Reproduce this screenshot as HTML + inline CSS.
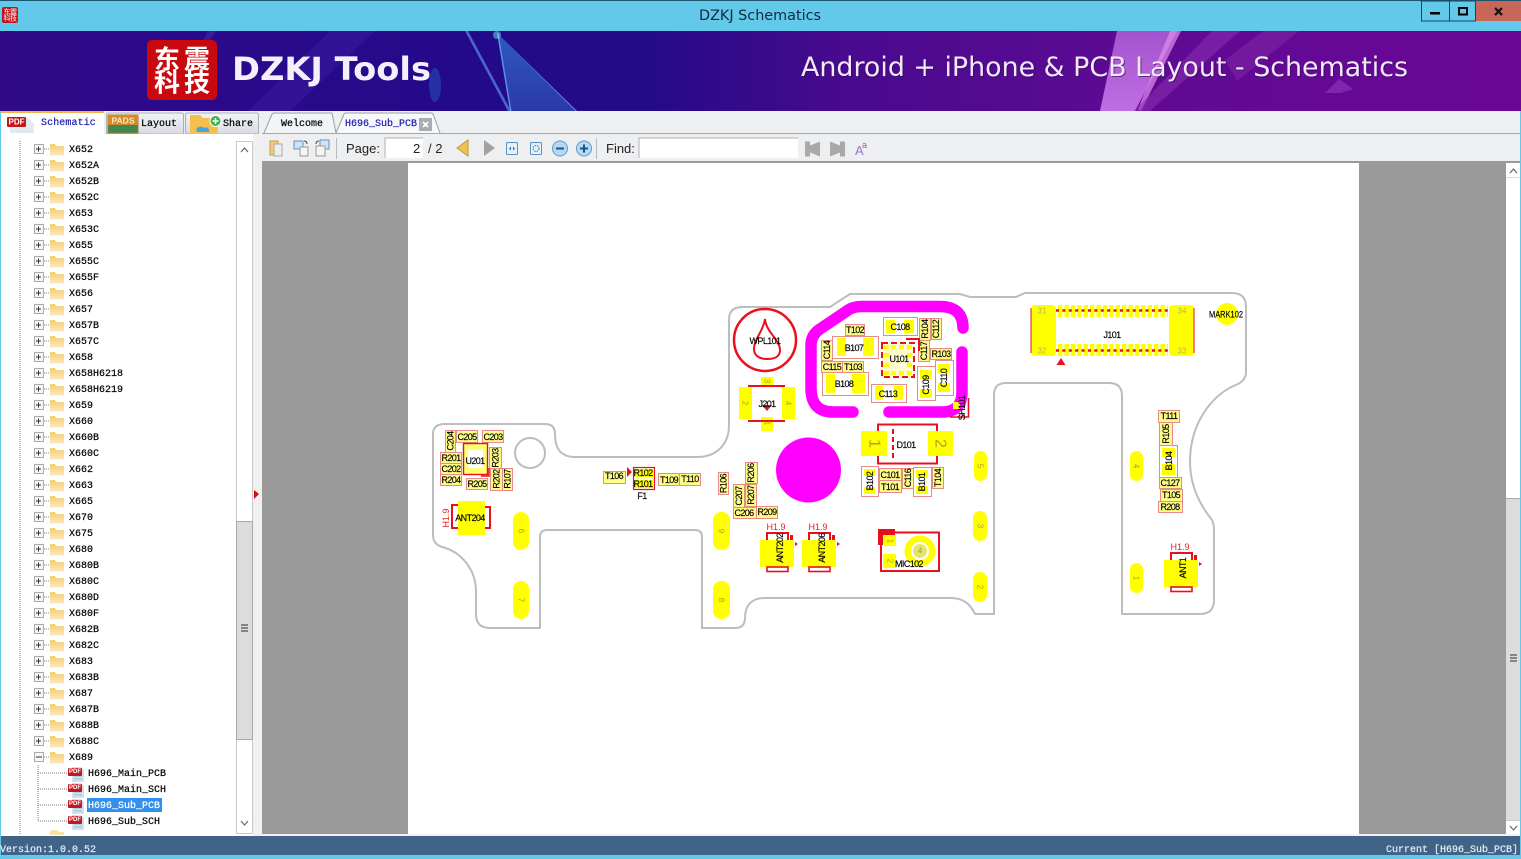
<!DOCTYPE html>
<html lang="en"><head><meta charset="utf-8"><title>DZKJ Schematics</title>
<style>
html,body{margin:0;padding:0;width:1521px;height:859px;overflow:hidden;background:#eeeff1}
svg{position:absolute;left:0;top:0}
.m{position:absolute;font-family:"Liberation Mono",monospace;font-size:10px;white-space:pre;color:#000;-webkit-text-stroke:.2px currentColor}
.t{font:9px "Liberation Sans",sans-serif;letter-spacing:-.6px;text-anchor:middle;dominant-baseline:central;fill:#000;stroke:#000;stroke-width:.15px}
.n{font:8px "Liberation Sans",sans-serif;text-anchor:middle;dominant-baseline:central;fill:#a5a520}
.h{font:9px "Liberation Sans",sans-serif;text-anchor:middle;dominant-baseline:central;fill:#e0202a}
.b{fill:#fffd88;stroke:#e88a8a;stroke-width:1}
.y{fill:#ffff00}
.r{fill:none;stroke:#e8101c;stroke-width:2}
.u{font:13px "Liberation Sans",sans-serif;fill:#222}
</style></head><body>
<svg width="1521" height="859" viewBox="0 0 1521 859" xmlns="http://www.w3.org/2000/svg">
<defs>
<linearGradient id="bn" x1="0" x2="1" y1="0" y2="0"><stop offset="0" stop-color="#300a89"/><stop offset=".3" stop-color="#230a8a"/><stop offset=".42" stop-color="#220a88"/><stop offset=".55" stop-color="#470a8e"/><stop offset=".75" stop-color="#5f0a94"/><stop offset="1" stop-color="#6a0796"/></linearGradient>
<linearGradient id="st" x1="0" x2="0" y1="0" y2="1"><stop offset="0" stop-color="#2f62c8"/><stop offset="1" stop-color="#2c3eaa"/></linearGradient>
<linearGradient id="pk" x1="0" x2="0" y1="0" y2="1"><stop offset="0" stop-color="#b060d8"/><stop offset="1" stop-color="#d080f0"/></linearGradient>
<linearGradient id="fd" x1="0" x2="0" y1="0" y2="1"><stop offset="0" stop-color="#f3cf74"/><stop offset="1" stop-color="#fbeab8"/></linearGradient>
<linearGradient id="tb" x1="0" x2="0" y1="0" y2="1"><stop offset="0" stop-color="#f2f3f6"/><stop offset="1" stop-color="#d8dbe2"/></linearGradient>
<pattern id="rows" x="0" y="141" width="70" height="16" patternUnits="userSpaceOnUse">
<rect x="34.500" y="3.500" width="9" height="9" fill="#f6f6f6" stroke="#aaa"/><path d="M36 8h5M38.500 5.500v5" stroke="#333" fill="none"/>
<path d="M44 8h6" stroke="#888" stroke-dasharray="1 1"/>
<path d="M50 3h5l1 2h8v9.500h-14z" fill="url(#fd)"/>
</pattern>
<g id="pdf"><path d="M72 -6h9l3 3v12h-12z" fill="#cfe3ef"/><path d="M74 3h8M74 6h8" stroke="#8fbddb"/><rect x="68" y="-5" width="14" height="8" rx="1" fill="#c4161c"/><text x="75" y="-1" font-family="Liberation Sans,sans-serif" font-size="6" font-weight="700" fill="#fff" text-anchor="middle" dominant-baseline="central">PDF</text><path d="M58 0h10" stroke="#777" stroke-dasharray="1 1"/></g>
</defs>

<!-- title bar -->
<rect width="1521" height="31" fill="#62c9ea"/>
<rect width="1521" height="1" fill="#1c5470"/>
<rect x="2" y="7" width="16" height="16" rx="2" fill="#c0141c"/>
<text x="10" y="12" font-family="Noto Sans CJK SC,sans-serif" font-size="7" fill="#fff" text-anchor="middle" dominant-baseline="central" letter-spacing="-.5">东震</text>
<text x="10" y="18.500" font-family="Noto Sans CJK SC,sans-serif" font-size="7" fill="#fff" text-anchor="middle" dominant-baseline="central" letter-spacing="-.5">科技</text>
<text x="760" y="16" font-family="DejaVu Sans,sans-serif" font-size="14" fill="#15293c" text-anchor="middle" dominant-baseline="central" textLength="122" lengthAdjust="spacingAndGlyphs">DZKJ Schematics</text>
<rect x="1421.500" y="1" width="28" height="20" fill="#62c9ea" stroke="#16465e"/>
<rect x="1449.500" y="1" width="26" height="20" fill="#62c9ea" stroke="#16465e"/>
<rect x="1476" y="1" width="45" height="20" fill="#c8665a"/>
<rect x="1430" y="12" width="10" height="2.500" fill="#000"/>
<rect x="1459" y="8" width="8" height="6.500" fill="none" stroke="#000" stroke-width="2"/>
<path d="M1495 8l7 7M1502 8l-7 7" stroke="#111" stroke-width="2.200"/>

<!-- banner -->
<rect y="31" width="1521" height="80" fill="url(#bn)"/>
<path d="M248 111L330 31h45L290 111z" fill="#3a1ca0" opacity=".55"/>
<path d="M196 55l12-24h8l-16 24z" fill="#4a3ab0" opacity=".4"/>
<path d="M465 31h3l43 80h-3z" fill="#5a8fe0" opacity=".7"/>
<path d="M497 33l13 78h67z" fill="url(#st)" opacity=".9"/>
<path d="M497 33l13 78h1.500l-13-78zM497 33l80 78h-1.500z" fill="#6fb0f0" opacity=".7"/>
<circle cx="497" cy="35" r="4" fill="#6fe6f0" opacity=".5"/>
<ellipse cx="435" cy="85" rx="6" ry="17" fill="#2a6ad0" opacity=".4"/>
<path d="M1117 31h60l-42 80h-35z" fill="url(#pk)" opacity=".85"/>
<path d="M1170 31l-32 78 3 2 40-80z" fill="#e08ef0" opacity=".7"/>
<path d="M1150 111l90-80h-28l-78 80z" fill="#8a30b0" opacity=".55"/>
<path d="M1225 60l38-29h36l-62 50z" fill="#7d25a5" opacity=".6"/>
<path d="M1325 93l14-14 14 10-12 4z" fill="#8a35b5" opacity=".7"/>
<rect x="147" y="40" width="70" height="60" rx="5" fill="#c9090f"/>
<g font-family="Noto Sans CJK SC,sans-serif" font-size="26" font-weight="700" fill="#fff" text-anchor="middle" dominant-baseline="central">
<text x="167" y="58">东</text><text x="197" y="58">震</text><text x="167" y="81">科</text><text x="197" y="81">技</text>
</g>
<text x="232" y="80" font-family="DejaVu Sans,sans-serif" font-weight="700" font-size="32" fill="#f4f0fb" textLength="199" lengthAdjust="spacingAndGlyphs">DZKJ Tools</text>
<text x="802" y="77" font-family="DejaVu Sans,sans-serif" font-size="27" fill="#2a0a50" opacity=".6" textLength="607" lengthAdjust="spacingAndGlyphs">Android + iPhone &amp; PCB Layout - Schematics</text>
<text x="801" y="76" font-family="DejaVu Sans,sans-serif" font-size="27" fill="#f2e8f8" textLength="607" lengthAdjust="spacingAndGlyphs">Android + iPhone &amp; PCB Layout - Schematics</text>

<!-- tabs strip -->
<rect y="111" width="1521" height="51" fill="#eeeff1"/>
<rect x="262" y="133" width="1259" height="1" fill="#a4a9ad"/>
<path d="M1 134V114q0-2 2-2h99q2 0 2 2v20z" fill="#fff"/>
<rect x="1" y="111" width="103" height="2" fill="#f2b34a"/>
<path d="M106.500 134v-19q0-2 2-2h73q2 0 2 2v19z" fill="url(#tb)" stroke="#aab0b8"/>
<path d="M185.500 134v-19q0-2 2-2h69q2 0 2 2v19z" fill="url(#tb)" stroke="#aab0b8"/>
<path d="M10 118h18l6 6v9H10z" fill="#dfeaf2"/><rect x="7" y="117" width="19" height="10" rx="1" fill="#c4161c"/>
<text x="16.500" y="122" font-family="Liberation Sans,sans-serif" font-size="8" font-weight="700" fill="#fff" text-anchor="middle" dominant-baseline="central">PDF</text>
<rect x="108" y="115" width="30" height="18" fill="#3c8a52" stroke="#b07830"/><rect x="108" y="115" width="30" height="10" fill="#d58a2a"/>
<text x="123" y="120.500" font-family="Liberation Sans,sans-serif" font-size="8.500" font-weight="700" fill="#f6ecc0" text-anchor="middle" dominant-baseline="central">PADS</text>
<path d="M190 133v-18h10l3 3h15v15z" fill="#f3c04e"/>
<path d="M197 132c-3-5 5-7 7-4 3-2 6 1 5 4z" fill="#4aa3dc"/>
<circle cx="215.500" cy="121" r="5.500" fill="#45b04a" stroke="#fff"/><path d="M212.500 121h6M215.500 118v6" stroke="#fff" stroke-width="1.500"/>
<path d="M264 133l8-19q1-1 2-1h58l4 20" fill="#f3f4f6" stroke="#9aa0a6"/>
<path d="M336 133l8-19q1-1 2-1h85q1 0 2 1l7 19" fill="#f7f8fa" stroke="#9aa0a6"/>
<rect x="419" y="118" width="13" height="13" fill="#a9acb1"/><path d="M423 122l5 5M428 122l-5 5" stroke="#fff" stroke-width="1.800"/>

<!-- tree panel -->
<rect y="134" width="262" height="702" fill="#fff"/>
<rect x="253" y="134" width="9" height="702" fill="#f0f0f0"/>
<path d="M254 490l5 4-5 5z" fill="#c8101c"/>
<path d="M20 141V835" stroke="#777" stroke-dasharray="1 1"/>
<path d="M38 765V821" stroke="#777" stroke-dasharray="1 1"/>
<rect x="0" y="141" width="70" height="608" fill="url(#rows)"/>
<rect x="34.500" y="752.500" width="9" height="9" fill="#f6f6f6" stroke="#aaa"/><path d="M36 757h6" stroke="#333"/>
<path d="M44 757h6" stroke="#888" stroke-dasharray="1 1"/>
<path d="M50 752h5l1 2h8v9.500H50z" fill="url(#fd)"/>
<path d="M50 835v-3q0-2 2-2h5l2 2h5v3z" fill="#f7e3a5"/>
<path d="M38 773h20M38 789h20M38 805h20M38 821h20" stroke="#777" stroke-dasharray="1 1"/>
<use href="#pdf" y="773"/><use href="#pdf" y="789"/><use href="#pdf" y="805"/><use href="#pdf" y="821"/>
<rect x="87" y="798" width="75" height="14" fill="#3390ea"/>
<rect x="236.500" y="141.500" width="16" height="692" fill="#fff" stroke="#c9c9c9"/>
<rect x="236.500" y="521.500" width="16" height="218" fill="#dcdcdc" stroke="#a9a9a9"/>
<path d="M241 152l3.500-4 3.500 4M241 821l3.500 4 3.500-4" fill="none" stroke="#666" stroke-width="1.200"/>
<path d="M241 625h7M241 628h7M241 631h7" stroke="#666" stroke-width="1.400"/>

<!-- toolbar -->
<g fill="none" stroke-width="1">
<path d="M270 141h8v14h-8z" fill="#f4c978" stroke="#c99a4a"/><path d="M274 144h8v12h-8z" fill="#eee" stroke="#aaa"/>
<path d="M294 141h9v8h-9z" fill="#cfe3f5" stroke="#6c92b5"/><path d="M300 147h8v9h-8z" fill="#f4f4f4" stroke="#999"/><path d="M304 141q3 0 3 3" stroke="#444"/>
<path d="M320 140h9v9h-9z" fill="#cfe3f5" stroke="#6c92b5"/><path d="M316 146h9v10h-9z" fill="#f4f4f4" stroke="#999"/><path d="M319 141q-3 0-3 3" stroke="#444"/>
</g>
<rect x="336" y="138" width="1" height="21" fill="#b9bcbf"/>
<text class="u" x="346" y="153">Page:</text>
<rect x="385" y="138" width="38" height="20" fill="#fff"/><path d="M385 158v-20h38" fill="none" stroke="#aeb1b4"/>
<text class="u" x="413" y="153">2</text><text class="u" x="428" y="153">/ 2</text>
<path d="M468 140v16l-11-8z" fill="#f1c24f" stroke="#b89a50"/>
<path d="M484 140v16l11-8z" fill="#a2a2a2"/>
<g fill="#e6f0f8" stroke="#5c90c0"><rect x="506.500" y="142.500" width="11" height="12" rx="1"/><rect x="530.500" y="142.500" width="11" height="12" rx="1"/></g>
<path d="M509 148.500l2-2v4zM515 148.500l-2-2v4z" fill="#2a6aa5"/>
<circle cx="536" cy="148.500" r="3" fill="none" stroke="#3b78ae" stroke-dasharray="1.500 1"/>
<circle cx="560" cy="148.500" r="7.500" fill="#b7d8f0" stroke="#5c9ccf"/><path d="M556 148.500h8" stroke="#14539a" stroke-width="2"/>
<circle cx="584" cy="148.500" r="7.500" fill="#b7d8f0" stroke="#5c9ccf"/><path d="M580 148.500h8M584 144.500v8" stroke="#14539a" stroke-width="2"/>
<rect x="596" y="138" width="1" height="21" fill="#b9bcbf"/>
<text class="u" x="606" y="153">Find:</text>
<rect x="639" y="138" width="159" height="20" fill="#fff"/><path d="M639 158v-20h159" fill="none" stroke="#aeb1b4"/>
<path d="M805 141.500h5v4l10-4v15l-10-4v4h-5z" fill="#a9a9a9"/>
<path d="M845 141.500h-5v4l-10-4v15l10-4v4h5z" fill="#a9a9a9"/>
<text x="855" y="155" font-family="Liberation Sans,sans-serif" font-size="13" fill="#8a7ad8">A</text>
<text x="862" y="148" font-family="Liberation Sans,sans-serif" font-size="9" fill="#d04a80">a</text>

<!-- doc view -->
<rect x="262" y="161" width="1259" height="2" fill="#9a9a9a"/>
<rect x="262" y="163" width="1244" height="671" fill="#9a9a9a"/>
<rect x="408" y="163" width="951" height="671" fill="#fff"/>
<rect x="262" y="834" width="1259" height="2" fill="#f2f2f2"/>
<rect x="1506" y="163" width="14" height="671" fill="#fff"/>
<rect x="1506" y="499" width="14" height="321" fill="#dcdcdc"/><rect x="1506" y="498" width="14" height="1" fill="#aaa"/>
<rect x="1506" y="177" width="14" height="1" fill="#ddd"/><rect x="1506" y="820" width="14" height="1" fill="#ccc"/>
<path d="M1510 173l3.500-4 3.500 4M1510 826l3.500 4 3.500-4" fill="none" stroke="#666" stroke-width="1.200"/>
<path d="M1510 655h7M1510 658h7M1510 661h7" stroke="#666" stroke-width="1.400"/>

<!-- status bar -->
<rect y="836" width="1521" height="19" fill="#3f6488"/>
<rect y="855" width="1521" height="4" fill="#62c9ea"/>
<rect x="0" y="111" width="1" height="744" fill="#62c9ea"/><rect x="1520" y="111" width="1" height="744" fill="#62c9ea"/>

<!-- PCB outline -->
<path d="M445 424H545Q555 424 555 434C555 450 562 457 575 457H697C716 457 729 445 729 425V320Q729 307 742 307H830L850 294H960L970 297H1016L1025 293H1232Q1246 293 1246 307V372Q1246 380 1238 384C1210 395 1190 425 1190 462C1190 485 1200 505 1212 520Q1214 524 1214 530V600Q1214 614 1200 614H1122V396Q1122 383 1109 383H1006Q994 383 994 395V614H975C970 604 964 598 950 598H765C752 598 745 605 745 618Q745 628 735 628H702V537Q702 530 695 530H547Q540 530 540 537V628H490Q476 628 476 614V592C476 570 462 552 442 547Q433 544 433 535V434Q433 424 445 424Z" fill="none" stroke="#bdbdbd" stroke-width="2"/>
<circle cx="530" cy="453" r="15" fill="none" stroke="#bdbdbd" stroke-width="2"/>

<!-- magenta -->
<path d="M853 412H833Q811 412 811 388V345Q811 335 820 329L849 309.500Q854 306.500 862 306.500H940Q963 306.500 963 328" fill="none" stroke="#ff00ff" stroke-width="11.500" stroke-linecap="round" stroke-linejoin="round"/>
<path d="M962 352V392Q962 412 942 412H889" fill="none" stroke="#ff00ff" stroke-width="11.500" stroke-linecap="round"/>
<circle cx="808.500" cy="470" r="32.500" fill="#ff00ff"/>

<!-- pads long -->
<g class="y">
<rect x="513" y="512" width="16" height="38" rx="8"/><rect x="513" y="581" width="16" height="38" rx="8"/>
<rect x="713" y="512" width="17" height="38" rx="8"/><rect x="713" y="581" width="17" height="38" rx="8"/>
<rect x="974" y="451" width="13" height="30" rx="6.500"/><rect x="973" y="511" width="14" height="30" rx="7"/><rect x="973" y="572" width="14" height="30" rx="7"/>
<rect x="1130" y="451" width="13" height="30" rx="6.500"/><rect x="1130" y="563" width="13" height="30" rx="6.500"/>
</g>
<g class="n">
<text transform="rotate(90 521 531)" x="521" y="531">6</text><text transform="rotate(90 521 600)" x="521" y="600">7</text>
<text transform="rotate(90 721 531)" x="721" y="531">9</text><text transform="rotate(90 721 600)" x="721" y="600">8</text>
<text transform="rotate(90 980 466)" x="980" y="466">5</text><text transform="rotate(90 980 526)" x="980" y="526">3</text><text transform="rotate(90 980 587)" x="980" y="587">2</text>
<text transform="rotate(90 1136 466)" x="1136" y="466">4</text><text transform="rotate(90 1136 578)" x="1136" y="578">1</text>
</g>

<!-- WPL101 -->
<circle cx="765" cy="340" r="31" fill="none" stroke="#e8101c" stroke-width="2.500"/>
<path d="M765 319C766 332 780 340 780 350C780 358 773 359 767 359C760 359 754 356 754 349C754 339 763 332 765 319Z" fill="none" stroke="#e8101c" stroke-width="2"/>
<text class="t" x="765" y="341">WPL101</text>

<!-- small components horizontal -->
<g>
<rect class="b" x="845.500" y="324.500" width="19" height="11"/><text class="t" x="855" y="330">T102</text>
<rect class="b" x="821.500" y="361.500" width="21" height="11"/><text class="t" x="832" y="367">C115</text>
<rect class="b" x="842.500" y="361.500" width="21" height="11"/><text class="t" x="853" y="367">T103</text>
<rect class="b" x="930.500" y="348.500" width="21" height="11"/><text class="t" x="941" y="354">R103</text>
<rect class="b" x="879.500" y="468.500" width="22" height="12"/><text class="t" x="890" y="475">C101</text>
<rect class="b" x="879.500" y="480.500" width="22" height="12"/><text class="t" x="890" y="487">T101</text>
<rect class="b" x="456.500" y="430.500" width="21" height="12"/><text class="t" x="467" y="437">C205</text>
<rect class="b" x="482.500" y="430.500" width="21" height="12"/><text class="t" x="493" y="437">C203</text>
<rect class="b" x="440.500" y="452.500" width="21" height="11"/><text class="t" x="451" y="458">R201</text>
<rect class="b" x="440.500" y="463.500" width="21" height="11"/><text class="t" x="451" y="469">C202</text>
<rect class="b" x="440.500" y="474.500" width="21" height="11"/><text class="t" x="451" y="480">R204</text>
<rect class="b" x="466.500" y="478.500" width="21" height="11"/><text class="t" x="477" y="484">R205</text>
<rect class="b" x="603.500" y="471.500" width="22" height="12"/><text class="t" x="614" y="476">T106</text>
<rect class="b" x="658.500" y="473.500" width="21" height="12"/><text class="t" x="669" y="480">T109</text>
<rect class="b" x="679.500" y="473.500" width="21" height="12"/><text class="t" x="690" y="479">T110</text>
<rect class="b" x="733.500" y="507.500" width="23" height="11"/><text class="t" x="744" y="513">C206</text>
<rect class="b" x="756.500" y="506.500" width="21" height="12"/><text class="t" x="767" y="512">R209</text>
<rect class="b" x="1158.500" y="410.500" width="21" height="12"/><text class="t" x="1169" y="416">T111</text>
<rect class="b" x="1159.500" y="477.500" width="22" height="11"/><text class="t" x="1170" y="483">C127</text>
<rect class="b" x="1160.500" y="489.500" width="22" height="12"/><text class="t" x="1171" y="495">T105</text>
<rect class="b" x="1158.500" y="501.500" width="24" height="11"/><text class="t" x="1170" y="507">R208</text>
</g>
<!-- small components vertical -->
<g>
<rect class="b" x="919.500" y="318.500" width="11" height="22"/><text class="t" transform="rotate(-90 925 329)" x="925" y="329">R104</text>
<rect class="b" x="931.500" y="318.500" width="10" height="21"/><text class="t" transform="rotate(-90 936 329)" x="936" y="329">C112</text>
<rect class="b" x="821.500" y="340.500" width="11" height="20"/><text class="t" transform="rotate(-90 827 350)" x="827" y="350">C114</text>
<rect class="b" x="918.500" y="340.500" width="11" height="21"/><text class="t" transform="rotate(-90 924 351)" x="924" y="351">C117</text>
<rect class="b" x="902.500" y="468.500" width="11" height="20"/><text class="t" transform="rotate(-90 908 478)" x="908" y="478">C116</text>
<rect class="b" x="932.500" y="467.500" width="11" height="21"/><text class="t" transform="rotate(-90 938 478)" x="938" y="478">T104</text>
<rect class="b" x="718.500" y="472.500" width="10" height="22"/><text class="t" transform="rotate(-90 723.500 483.500)" x="723.500" y="483.500">R106</text>
<rect class="b" x="745.500" y="462.500" width="12" height="21"/><text class="t" transform="rotate(-90 751 473)" x="751" y="473">R206</text>
<rect class="b" x="733.500" y="484.500" width="11" height="23"/><text class="t" transform="rotate(-90 739 496)" x="739" y="496">C207</text>
<rect class="b" x="745.500" y="484.500" width="11" height="22"/><text class="t" transform="rotate(-90 751 495)" x="751" y="495">R207</text>
<rect class="b" x="445.500" y="430.500" width="10" height="22"/><text class="t" transform="rotate(-90 450.500 441)" x="450.500" y="441">C204</text>
<rect class="b" x="489.500" y="447.500" width="12" height="21"/><text class="t" transform="rotate(-90 495.500 458)" x="495.500" y="458">R203</text>
<rect class="b" x="490.500" y="468.500" width="12" height="22"/><text class="t" transform="rotate(-90 496.500 479)" x="496.500" y="479">R202</text>
<rect class="b" x="502.500" y="468.500" width="10" height="22"/><text class="t" transform="rotate(-90 507.500 479)" x="507.500" y="479">R107</text>
<rect class="b" x="1159.500" y="422.500" width="13" height="23"/><text class="t" transform="rotate(-90 1166 434)" x="1166" y="434">R105</text>
</g>
<!-- larger two-pad parts -->
<g fill="#fff" stroke="#e88a8a">
<rect x="883.500" y="317.500" width="34" height="18"/><rect x="832.500" y="336.500" width="46" height="22"/><rect x="822.500" y="372.500" width="46" height="23"/><rect x="871.500" y="384.500" width="35" height="18"/><rect x="917.500" y="366.500" width="18" height="34"/><rect x="935.500" y="360.500" width="18" height="35"/><rect x="861.500" y="466.500" width="17" height="30"/><rect x="913.500" y="467.500" width="18" height="29"/><rect x="1159.500" y="445.500" width="18" height="32"/>
</g>
<g class="y">
<rect x="886" y="320" width="9" height="13"/><rect x="904" y="320" width="10" height="13"/>
<rect x="837" y="338" width="9" height="18"/><rect x="863" y="338" width="11" height="18"/>
<rect x="826" y="374" width="9" height="19"/><rect x="852" y="374" width="13" height="19"/>
<rect x="875" y="386" width="8" height="14"/><rect x="894" y="386" width="9" height="14"/>
<rect x="920" y="370" width="12" height="9"/><rect x="920" y="389" width="12" height="9"/>
<rect x="938" y="364" width="12" height="9"/><rect x="938" y="383" width="12" height="9"/>
<rect x="864" y="469" width="11" height="7"/><rect x="864" y="487" width="11" height="7"/>
<rect x="916" y="470" width="12" height="8"/><rect x="916" y="486" width="12" height="8"/>
<rect x="1162" y="448" width="13" height="9"/><rect x="1162" y="464" width="13" height="11"/>
</g>
<text class="t" x="900" y="327">C108</text><text class="t" x="854" y="348">B107</text><text class="t" x="844" y="384">B108</text><text class="t" x="888" y="394">C113</text>
<text class="t" transform="rotate(-90 926 385)" x="926" y="385">C109</text>
<text class="t" transform="rotate(-90 944 378)" x="944" y="378">C110</text>
<text class="t" transform="rotate(-90 870 481)" x="870" y="481">B102</text>
<text class="t" transform="rotate(-90 922 482)" x="922" y="482">B101</text>
<text class="t" transform="rotate(-90 1169 461)" x="1169" y="461">B104</text>

<!-- U101 -->
<rect x="882" y="343" width="32" height="34" fill="#fffbd0" stroke="#e8101c" stroke-width="2" stroke-dasharray="6 3"/>
<g class="y"><rect x="884" y="345" width="5" height="4"/><rect x="891" y="345" width="5" height="4"/><rect x="899" y="345" width="5" height="4"/><rect x="907" y="345" width="5" height="4"/><rect x="884" y="353" width="5" height="4"/><rect x="907" y="353" width="5" height="4"/><rect x="884" y="363" width="5" height="4"/><rect x="907" y="363" width="5" height="4"/><rect x="884" y="371" width="5" height="4"/><rect x="891" y="371" width="5" height="4"/><rect x="899" y="371" width="5" height="4"/><rect x="907" y="371" width="5" height="4"/></g>
<text class="t" x="899" y="359">U101</text>
<path d="M906 339H919V351" fill="none" stroke="#e8101c" stroke-width="2"/>

<!-- SH101 -->
<rect x="953" y="402" width="7" height="7" class="y"/>
<path d="M968.500 398V417H950" fill="none" stroke="#e8101c" stroke-width="1.600"/>
<text class="t" transform="rotate(-90 962 408)" x="962" y="408">SH101</text>

<!-- J201 -->
<g class="y"><rect x="739" y="387" width="13" height="32"/><rect x="782" y="387" width="13" height="32"/><rect x="761" y="377" width="12" height="9"/><rect x="761" y="417" width="12" height="14"/></g>
<path d="M748 386H785M748 421H785" class="r"/>
<path d="M762 405h10l-5 6z" fill="#e8101c"/>
<text class="t" x="767" y="404">J201</text>
<g class="n"><text x="745" y="403" transform="rotate(90 745 403)">2</text><text x="788" y="403" transform="rotate(90 788 403)">4</text><text x="767" y="381" transform="rotate(90 767 381)">3</text><text x="767" y="423" transform="rotate(90 767 423)">1</text></g>

<!-- D101 -->
<rect x="878" y="424.500" width="59" height="39" class="r"/>
<rect x="861" y="431" width="26" height="25" class="y"/><rect x="928" y="431" width="25" height="25" class="y"/>
<path d="M893 429V460" stroke="#e8101c" stroke-width="2" stroke-dasharray="5 3"/>
<text class="t" x="906" y="445">D101</text>
<text x="874" y="443.500" transform="rotate(90 874 443.500)" font-family="Liberation Sans,sans-serif" font-size="16" fill="#a5a520" text-anchor="middle" dominant-baseline="central">1</text>
<text x="940" y="443.500" transform="rotate(90 940 443.500)" font-family="Liberation Sans,sans-serif" font-size="16" fill="#a5a520" text-anchor="middle" dominant-baseline="central">2</text>

<!-- U201 -->
<rect x="463.500" y="443.500" width="24" height="31" fill="#ffff70" stroke="#e8101c" stroke-width="1.400"/>
<rect x="468" y="450" width="15" height="18" fill="#fff"/>
<text class="t" x="475" y="461">U201</text>
<path d="M481 476H489V468" fill="none" stroke="#e8101c" stroke-width="1.500"/>

<!-- F1 -->
<rect x="633.500" y="467.500" width="21" height="22" fill="#fffbd0" stroke="#e8101c" stroke-width="1.200"/>
<rect x="635" y="469" width="18" height="8" class="y"/><rect x="635" y="480" width="18" height="8" class="y"/>
<path d="M627 467l5 5-5 5z" fill="#e8101c"/>
<text class="t" x="643" y="473">R102</text><text class="t" x="643" y="484">R101</text>
<text class="t" x="642" y="496">F1</text>

<!-- ANT204 -->
<rect x="458" y="501" width="27" height="34" class="y"/>
<path d="M458 505H452V528H458M485 507H490V528H485" class="r"/>
<text class="h" x="446" y="518" transform="rotate(-90 446 518)">H1.9</text>
<text class="t" x="470" y="518">ANT204</text>

<!-- ANT202/206 -->
<g>
<rect x="760" y="540" width="34" height="27" class="y"/><path d="M767 540V533H788V540" class="r"/><rect x="767" y="567" width="21" height="4.500" fill="#fff" stroke="#e8101c" stroke-width="1.600"/>
<path d="M795 542l3 2-3 2zM790 535h3v5h-3z" fill="#e8101c"/>
<text class="h" x="776" y="527">H1.9</text><text class="t" transform="rotate(-90 780 548)" x="780" y="548">ANT202</text>
<rect x="802" y="540" width="34" height="27" class="y"/><path d="M809 540V533H830V540" class="r"/><rect x="809" y="567" width="21" height="4.500" fill="#fff" stroke="#e8101c" stroke-width="1.600"/>
<path d="M837 542l3 2-3 2zM832 535h3v5h-3z" fill="#e8101c"/>
<text class="h" x="818" y="527">H1.9</text><text class="t" transform="rotate(-90 822 548)" x="822" y="548">ANT206</text>
<rect x="1164" y="560" width="34" height="27" class="y"/><path d="M1171 560V553H1192V560" class="r"/><rect x="1171" y="587" width="21" height="4.500" fill="#fff" stroke="#e8101c" stroke-width="1.600"/>
<path d="M1199 562l3 2-3 2zM1194 555h3v5h-3z" fill="#e8101c"/>
<text class="h" x="1180" y="547">H1.9</text><text class="t" transform="rotate(-90 1183 568)" x="1183" y="568">ANT1</text>
</g>

<!-- MIC102 -->
<rect x="881" y="532.500" width="58" height="38.500" class="r"/>
<path d="M878 529H895V535H883V545H878z" fill="#e8101c"/>
<rect x="883" y="535" width="13" height="11" class="y"/><rect x="883" y="554" width="13" height="14" class="y"/>
<circle cx="920" cy="551" r="15.500" class="y"/><circle cx="920" cy="551" r="9" fill="#fff"/><circle cx="920" cy="551" r="7" fill="#e4e470"/>
<text class="n" x="920" y="551">4</text><text class="n" x="890" y="541" transform="rotate(90 890 541)">1</text><text class="n" x="890" y="561" transform="rotate(90 890 561)">2</text>
<text class="t" x="909" y="564">MIC102</text>

<!-- J101 -->
<rect x="1031" y="305" width="25" height="51" rx="4" class="y"/><rect x="1169" y="305" width="25" height="51" rx="4" class="y"/>
<path d="M1031 308V353M1194 308V353" stroke="#e8101c"/>
<path d="M1058 311H1168M1058 350H1168" stroke="#ffff00" stroke-width="12" stroke-dasharray="4.400 2"/>
<path d="M1056 310.500H1169M1056 350.500H1169" stroke="#e8101c" stroke-width="2.500" stroke-dasharray="3 3.400"/>
<g fill="#b5b54a" font-family="Liberation Sans,sans-serif" font-size="8" text-anchor="middle" dominant-baseline="central"><text x="1042" y="311">31</text><text x="1182" y="311">34</text><text x="1042" y="351">32</text><text x="1182" y="351">33</text></g>
<text class="t" x="1112" y="335">J101</text>
<path d="M1061 358l4.500 7h-9z" fill="#e8101c"/>

<!-- MARK102 -->
<circle cx="1227" cy="314" r="11" class="y"/>
<text class="t" x="1209" y="314.500" style="text-anchor:start;letter-spacing:0" textLength="34" lengthAdjust="spacingAndGlyphs">MARK102</text>
</svg>

<!-- text overlays -->
<div class="m" style="left:41px;top:118px;color:#1b1bb0;letter-spacing:.1px">Schematic</div>
<div class="m" style="left:141px;top:119px">Layout</div>
<div class="m" style="left:223px;top:119px">Share</div>
<div class="m" style="left:281px;top:119px">Welcome</div>
<div class="m" style="left:345px;top:119px;color:#1b1bb0">H696_Sub_PCB</div>
<div class="m" style="left:69px;top:143px;line-height:16px">X652
X652A
X652B
X652C
X653
X653C
X655
X655C
X655F
X656
X657
X657B
X657C
X658
X658H6218
X658H6219
X659
X660
X660B
X660C
X662
X663
X665
X670
X675
X680
X680B
X680C
X680D
X680F
X682B
X682C
X683
X683B
X687
X687B
X688B
X688C
X689</div>
<div class="m" style="left:88px;top:767px;line-height:16px">H696_Main_PCB
H696_Main_SCH
<span style="color:#fff">H696_Sub_PCB</span>
H696_Sub_SCH</div>
<div class="m" style="left:0;top:845px;color:#e6eef5">Version:1.0.0.52</div>
<div class="m" style="right:3px;top:845px;color:#e6eef5">Current [H696_Sub_PCB]</div>
</body></html>
